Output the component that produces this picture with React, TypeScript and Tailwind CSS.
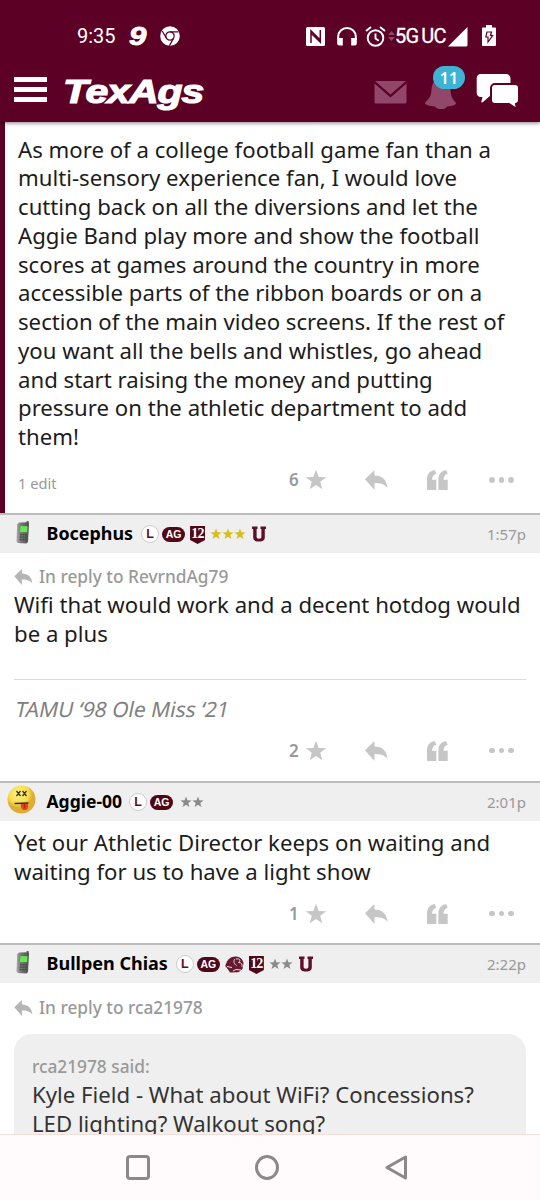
import React from "react";

const STAR = "M12 0.8l2.9 7.9 8.3.2-6.6 5.1 2.3 8.2-6.9-4.8-6.9 4.8 2.3-8.2L.8 8.9l8.3-.2z";

function StatusBar() {
  return (
    <div className="flex h-[60px] items-start pt-6 text-white">
      <div className="ml-[77px] w-[52px] font-['Roboto',sans-serif] text-[20px] leading-6">9:35</div>
      <div className="w-[31px] origin-left scale-x-[1.25] font-['Liberation_Sans',sans-serif] text-[25px] font-bold italic leading-[25px] [-webkit-text-stroke:0.8px_white]">9</div>
      <svg className="mt-[2px]" width="20" height="20" viewBox="0 0 20 20">
        <circle cx="10" cy="10" r="9.8" fill="#fff" />
        <g fill="none" stroke="#5c0025" strokeWidth="1.2">
          <circle cx="10" cy="10" r="4.2" />
          <path d="M10 5.8h8.6M6.4 12.1L2.2 5M13.6 12.1L9.4 19.6" />
        </g>
      </svg>
      <svg className="ml-[126px] mt-[3px]" width="19" height="19" viewBox="0 0 19 19">
        <rect width="19" height="19" rx="1.5" fill="#fff" />
        <path d="M5 16V3.800l9.300 9.300M14.300 3v12.200L5 6" fill="none" stroke="#5c0025" strokeWidth="1.5" />
      </svg>
      <svg className="ml-[12px] mt-[3px]" width="20" height="19" viewBox="0 0 20 19">
        <path d="M1.2 13V9.5a8.8 8.5 0 0 1 17.6 0V13" fill="none" stroke="#fff" strokeWidth="2" />
        <path d="M.2 11h5.6v7.5H2.2a2 2 0 0 1-2-2zM14.2 11h5.6v5.5a2 2 0 0 1-2 2h-3.6z" fill="#fff" />
      </svg>
      <svg className="ml-[8px] mt-[2px]" width="21" height="21" viewBox="0 0 21 21" fill="none" stroke="#fff" strokeWidth="1.9">
        <circle cx="10.5" cy="12" r="7.8" />
        <path d="M1 5L6 1M20 5L15 1M10.5 7.5v5l3.3 2.3" />
      </svg>
      <svg className="ml-[2px] mt-[7px]" width="7" height="10" viewBox="0 0 7 10"><path d="M0 4L3.5 0 7 4zM0 6h7L3.5 10z" fill="#8d4962" /></svg>
      <div className="w-[53px] whitespace-nowrap font-['Roboto',sans-serif] text-[20px] leading-6 tracking-[-0.7px] [word-spacing:-1.500px] [-webkit-text-stroke:0.3px_white]">5G UC</div>
      <svg className="mt-[3px]" width="20" height="20" viewBox="0 0 20 20"><path d="M0 19.5L19.5 0v18a1.5 1.5 0 0 1-1.5 1.5z" fill="#fff" /></svg>
      <svg className="ml-[14px] mt-[1px]" width="14" height="21" viewBox="0 0 14 21">
        <path d="M1 2.5h3V0h6v2.5h3a1 1 0 0 1 1 1V20a1 1 0 0 1-1 1H1a1 1 0 0 1-1-1V3.500a1 1 0 0 1 1-1z" fill="#fff" />
        <path d="M5 7h4.5L8.500 10.500h2.200L6 17v-5H3.800z" fill="none" stroke="#5c0025" strokeWidth="1.2" />
      </svg>
    </div>
  );
}

function Header() {
  return (
    <header className="relative z-10 h-[122px] shrink-0 bg-[#5c0025] shadow-[0_1px_4px_rgba(0,0,0,0.5)]">
      <StatusBar />
      <div className="flex h-[62px] items-start">
        <div className="ml-[14px] mt-[17px] flex w-[33px] flex-col gap-[5.500px]">
          <span className="h-[4.500px] bg-white" />
          <span className="h-[4.500px] bg-white" />
          <span className="h-[4.500px] bg-white" />
        </div>
        <div className="ml-[16px] mt-[11px] w-[310px]">
          <div className="w-max origin-left scale-x-[1.240] font-['Liberation_Sans',sans-serif] text-[33px] font-bold italic leading-[42px] tracking-[-0.8px] text-white [-webkit-text-stroke:1.2px_white]">TexAgs</div>
        </div>
        <svg className="ml-[1px] mt-[21px]" width="33" height="23" viewBox="0 0 33 23">
          <path d="M1 0h31L16.500 13.500zM.5 2.500l16 14 16-14V21a1.500 1.500 0 0 1-1.500 1.500H2A1.500 1.500 0 0 1 .5 21z" fill="#90476a" />
        </svg>
        <div className="relative ml-[17px] mt-[18px] h-[32px] w-[34px]">
          <svg width="34" height="32" viewBox="0 0 34 32">
            <path d="M17 1C9 1 8 7 7.500 12 7 20 4 21 1 25c0 2 4 3 10 3.500 1 2 3 2.500 6 2.500s5-.5 6-2.500c6-.5 9-1.500 9-3.500-3-4-5-5-5.500-13C26 7 25 1 17 1z" fill="#90476a" />
          </svg>
          <div className="absolute left-[9px] top-[-12px] flex h-[23px] w-[32px] items-center justify-center rounded-full bg-[#3eb3d6] font-['Noto_Sans',sans-serif] text-[16px] font-semibold text-white">11</div>
        </div>
        <svg className="ml-[18px] mt-[13px]" width="43" height="36" viewBox="0 0 43 36">
          <path d="M5 1h25a4.500 4.500 0 0 1 4.500 4.500V22H15l-8 7c-1 .8-2 .6-1.600-.6L6.500 24H5A4.500 4.500 0 0 1 .7 19.500v-14A4.500 4.500 0 0 1 5 1z" fill="#fff" />
          <path d="M19 11h20a4 4 0 0 1 4 4v12a4 4 0 0 1-3 4l1 5-8-5H19a4 4 0 0 1-4-4V15a4 4 0 0 1 4-4z" fill="#fff" stroke="#5c0025" strokeWidth="2" />
        </svg>
      </div>
    </header>
  );
}

function ReplyArrow({ className }: { className: string }) {
  return (
    <svg className={className} viewBox="0 0 23 20" fill="currentColor">
      <path d="M0 9.200L9.500 0v5.500C17 5.500 22 10 22.500 18c-3.500-4.500-8-5-13-5V20z" />
    </svg>
  );
}

function Actions({ count }: { count: string }) {
  return (
    <div className="flex h-[24px] items-center text-[#c6c6c6]">
      <div className="ml-[289px] w-[16px] text-[17px] font-semibold text-[#999]">{count}</div>
      <svg width="22" height="22" viewBox="0 0 24 24"><path d={STAR} fill="currentColor" /></svg>
      <ReplyArrow className="ml-[38px] h-[20px] w-[23px]" />
      <svg className="ml-[39px]" width="21" height="20" viewBox="0 0 21 20" fill="currentColor">
        <path d="M0 20V10C0 4 2.500 1 7.700 0l1.600 3.800C6.500 4.500 5.200 6.500 5 9.700h4.300V20zM11.400 20V10C11.400 4 14 1 19.100 0L20.700 3.800c-2.700.7-4 2.700-4.200 5.900h4.200V20z" />
      </svg>
      <div className="ml-[41px] flex gap-[4px]">
        <i className="h-[5.500px] w-[5.500px] rounded-full bg-current" />
        <i className="h-[5.500px] w-[5.500px] rounded-full bg-current" />
        <i className="h-[5.500px] w-[5.500px] rounded-full bg-current" />
      </div>
    </div>
  );
}

function Phone() {
  return (
    <svg width="14" height="23" viewBox="0 0 14 23">
      <defs>
        <linearGradient id="phone-case"><stop stopColor="#aaa" /><stop offset=".35" stopColor="#777" /><stop offset="1" stopColor="#505050" /></linearGradient>
      </defs>
      <path d="M10.500 0h2.200v4H10.500z" fill="#666" />
      <path d="M3 1.500l9-.3 1 1-1 18.800-1.500 1.500L2 22 .5 20.500l.7-17.200z" fill="url(#phone-case)" />
      <path d="M4.500 5l7 .3-.4 6L4 11z" fill="#65e852" />
      <path d="M4 13.500l7 .3M3.800 16l7 .3M3.700 18.500l6.800.3" stroke="#484848" strokeWidth="1.300" strokeDasharray="1.800 .7" />
    </svg>
  );
}

function Smiley() {
  return (
    <svg width="29" height="29" viewBox="0 0 29 29">
      <defs><radialGradient id="smiley-face" cx=".4" cy=".3"><stop stopColor="#fff28a" /><stop offset=".7" stopColor="#f7dd4c" /><stop offset="1" stopColor="#dcae35" /></radialGradient></defs>
      <circle cx="14.500" cy="14.500" r="14" fill="url(#smiley-face)" />
      <path d="M9.500 6l4 5M13.500 6l-4 5M15.500 6l4 5M19.500 6l-4 5" stroke="#3b3519" strokeWidth="1.300" />
      <path d="M7.500 18.500l14-.5" stroke="#402913" strokeWidth="1.600" />
      <path d="M13.500 19h7.500c.5 4-.5 6-3 6-3 0-4-2-4.500-6z" fill="#e44122" />
      <path d="M17.500 19l.3 4" stroke="#9c251b" strokeWidth=".9" />
    </svg>
  );
}

function LBadge() {
  return <span className="flex h-[18px] w-[18px] shrink-0 items-center justify-center rounded-full border border-[#ccc] bg-white font-['Liberation_Sans',sans-serif] text-[12.500px] font-bold text-[#5c1028]">L</span>;
}
function AgBadge() {
  return <span className="flex h-[15px] w-[23px] shrink-0 items-center justify-center rounded-full bg-[#500818] font-['Liberation_Sans',sans-serif] text-[10.500px] font-bold leading-none text-white">AG</span>;
}
function TwelveBadge() {
  return (
    <span className="flex h-[18px] w-[15px] shrink-0 justify-center bg-[#500818] pt-px font-['Liberation_Serif',serif] text-[14px] font-bold leading-[14px] tracking-[-0.8px] text-white [clip-path:polygon(0_0,100%_0,100%_78%,50%_100%,0_78%)]">12</span>
  );
}
function UBadge() {
  return (
    <svg width="14" height="16" viewBox="0 0 14 16"><path d="M0 .5h5.500v2.600H4.600v7.700c0 1.200.7 1.900 2.400 1.900s2.400-.7 2.400-1.900V3.100H8.500V.5H14v2.600h-1.200v8.200c0 2.900-1.800 4.200-5.800 4.200s-5.800-1.300-5.800-4.200V3.100H0z" fill="#5c1028" /></svg>
  );
}
function HelmetBadge() {
  return (
    <svg width="19" height="17" viewBox="0 0 19 17">
      <path d="M.3 10C2 3 6 .3 11 .5c4 .2 6.500 2.500 7.500 6.500l-1 6-4 3.200L5 16.500l-2-3z" fill="#651c32" />
      <path d="M11 3c4-1 5 2 2.500 3.500 3 0 4 1.500 3.500 4.500M2 10.500l5 1M8 15l3-1.500 5 .5M10 3c-2 2-1 5 1.500 6.500" stroke="#ead9dd" strokeWidth="1" fill="none" />
    </svg>
  );
}
function Stars({ count, gold }: { count: number; gold?: boolean }) {
  return (
    <span className={gold ? "flex text-[#d8bd1c]" : "flex text-[#8b8b8b]"}>
      {Array.from({ length: count }, (_, i) => (
        <svg key={i} width="12" height="12" viewBox="0 0 24 24"><path d={STAR} fill="currentColor" /></svg>
      ))}
    </span>
  );
}

function UserRow({ avatar, name, nameClass, badges, time }: { avatar: React.ReactNode; name: string; nameClass: string; badges: React.ReactNode; time: string }) {
  return (
    <div className="flex h-[40px] shrink-0 items-center border-t-2 border-[#bcbcbc] bg-[#efefef] pr-[14px]">
      <div className="flex w-[46.500px] shrink-0 items-center pb-[4px]">{avatar}</div>
      <div className={nameClass}>{name}</div>
      <div className="flex items-center">{badges}</div>
      <div className="ml-auto text-[15px] text-[#999]">{time}</div>
    </div>
  );
}

function Lines({ items }: { items: string[] }) {
  return <>{items.map((t) => <div key={t} className="h-[28.770px] w-max whitespace-nowrap text-[22.180px] leading-[28.770px]">{t}</div>)}</>;
}

function ReplyTo({ name }: { name: string }) {
  return (
    <div className="flex h-[26px] items-center text-[17.300px] font-medium text-[#999]">
      <ReplyArrow className="mr-[6px] h-[16px] w-[19px] text-[#b5b5b5]" />
      In reply to {name}
    </div>
  );
}

export default function App() {
  return (
    <div className="flex h-[1200px] w-[540px] flex-col overflow-hidden bg-white font-['Noto_Sans',sans-serif] text-[#1c1c1c]">
      <Header />
      <main className="flex h-[1012px] shrink-0 flex-col overflow-hidden">
        <article className="h-[391px] shrink-0 border-l-[5px] border-[#5c0025]">
          <div className="h-[331px] pl-[13px] pt-[12.600px]">
            <Lines items={[
              "As more of a college football game fan than a",
              "multi-sensory experience fan, I would love",
              "cutting back on all the diversions and let the",
              "Aggie Band play more and show the football",
              "scores at games around the country in more",
              "accessible parts of the ribbon boards or on a",
              "section of the main video screens. If the rest of",
              "you want all the bells and whistles, go ahead",
              "and start raising the money and putting",
              "pressure on the athletic department to add",
              "them!",
            ]} />
          </div>
          <div className="-ml-[5px] flex pt-[15px]">
            <div className="ml-[18px] mt-[3px] w-0 whitespace-nowrap text-[14.700px] leading-[24px] text-[#999]">1 edit</div>
            <div className="-ml-[18px]"><Actions count="6" /></div>
          </div>
        </article>

        <UserRow
          avatar={<div className="ml-[16px]"><Phone /></div>}
          name="Bocephus"
          nameClass="pb-[2px] text-[17.900px] font-bold text-black"
          time="1:57p"
          badges={<>
            <span className="ml-[8px]"><LBadge /></span>
            <span className="ml-[3px]"><AgBadge /></span>
            <span className="ml-[5px] mt-[2px]"><TwelveBadge /></span>
            <span className="ml-[5px]"><Stars count={3} gold /></span>
            <span className="ml-[6px]"><UBadge /></span>
          </>}
        />
        <article className="h-[228px] shrink-0 px-[14px] pt-[11px]">
          <ReplyTo name="RevrndAg79" />
          <div><Lines items={["Wifi that would work and a decent hotdog would", "be a plus"]} /></div>
          <div className="mt-[31px] border-t border-[#dadada] pt-[15px] text-[21px] leading-[28px] text-[#808080]"><div className="w-max skew-x-[-12deg] pl-[2px]">TAMU ‘98 Ole Miss ‘21</div></div>
          <div className="-ml-[14px] mt-[16px]"><Actions count="2" /></div>
        </article>

        <UserRow
          avatar={<div className="ml-[7px] pb-[2px]"><Smiley /></div>}
          name="Aggie-00"
          nameClass="pb-[2px] text-[17.500px] font-bold text-black"
          time="2:01p"
          badges={<>
            <span className="ml-[7px]"><LBadge /></span>
            <span className="ml-[3px]"><AgBadge /></span>
            <span className="ml-[7px]"><Stars count={2} /></span>
          </>}
        />
        <article className="h-[122px] shrink-0 pl-[14px] pt-[7px]">
          <Lines items={["Yet our Athletic Director keeps on waiting and", "waiting for us to have a light show"]} />
          <div className="-ml-[14px] mt-[16px]"><Actions count="1" /></div>
        </article>

        <UserRow
          avatar={<div className="ml-[16px]"><Phone /></div>}
          name="Bullpen Chias"
          nameClass="pb-[2px] text-[18px] font-bold text-black"
          time="2:22p"
          badges={<>
            <span className="ml-[8px]"><LBadge /></span>
            <span className="ml-[3px]"><AgBadge /></span>
            <span className="ml-[5px]"><HelmetBadge /></span>
            <span className="ml-[5px] mt-[2px]"><TwelveBadge /></span>
            <span className="ml-[5px]"><Stars count={2} /></span>
            <span className="ml-[6px]"><UBadge /></span>
          </>}
        />
        <article className="shrink-0 px-[14px] pt-[12px]">
          <ReplyTo name="rca21978" />
          <div className="mt-[13px] h-[200px] rounded-[18px] bg-[#efefef] pl-[18px] pt-[20px] text-[#333]">
            <div className="text-[17.300px] font-medium leading-[26px] text-[#999]">rca21978 said:</div>
            <Lines items={["Kyle Field - What about WiFi? Concessions?", "LED lighting? Walkout song?"]} />
          </div>
        </article>
      </main>
      <nav className="flex h-[66px] shrink-0 items-center border-t border-[#f6ded8] bg-[#fffafc]">
        <svg className="ml-[126px]" width="24" height="25" viewBox="0 0 24 25"><rect x="1.500" y="1.500" width="21" height="22" rx="2.500" fill="none" stroke="#8c8888" strokeWidth="3" /></svg>
        <svg className="ml-[105px]" width="24" height="25" viewBox="0 0 24 25"><ellipse cx="12" cy="12.500" rx="10.500" ry="11" fill="none" stroke="#8c8888" strokeWidth="3" /></svg>
        <svg className="ml-[106px]" width="23" height="25" viewBox="0 0 23 25"><path d="M20.500 2v21L2 12.500z" fill="none" stroke="#8c8888" strokeWidth="3" strokeLinejoin="round" /></svg>
      </nav>
    </div>
  );
}
